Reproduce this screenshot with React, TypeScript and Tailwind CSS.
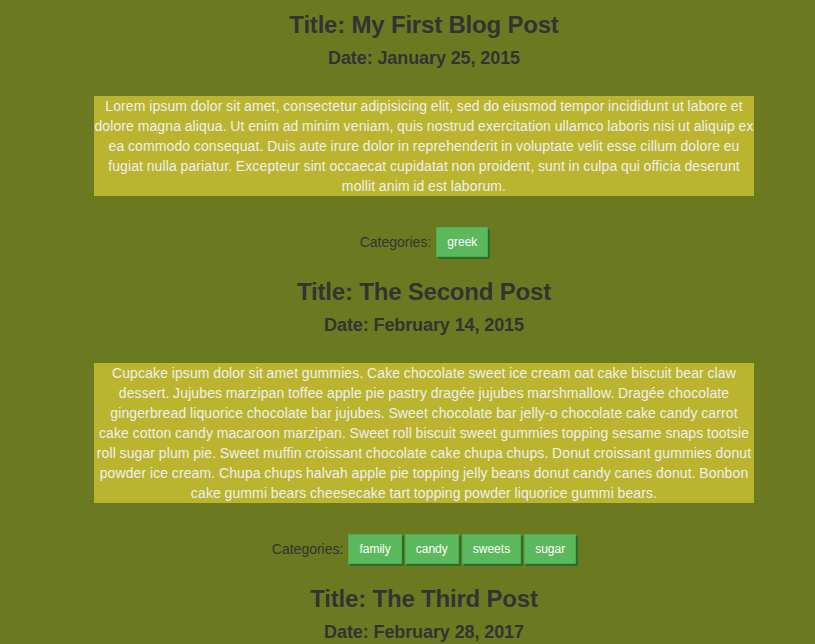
import React from 'react';

interface Post {
  title: string;
  date: string;
  body?: string;
  categories: string[];
}

const posts: Post[] = [
  {
    title: 'My First Blog Post',
    date: 'January 25, 2015',
    body: 'Lorem ipsum dolor sit amet, consectetur adipisicing elit, sed do eiusmod tempor incididunt ut labore et dolore magna aliqua. Ut enim ad minim veniam, quis nostrud exercitation ullamco laboris nisi ut aliquip ex ea commodo consequat. Duis aute irure dolor in reprehenderit in voluptate velit esse cillum dolore eu fugiat nulla pariatur. Excepteur sint occaecat cupidatat non proident, sunt in culpa qui officia deserunt mollit anim id est laborum.',
    categories: ['greek'],
  },
  {
    title: 'The Second Post',
    date: 'February 14, 2015',
    body: 'Cupcake ipsum dolor sit amet gummies. Cake chocolate sweet ice cream oat cake biscuit bear claw dessert. Jujubes marzipan toffee apple pie pastry dragée jujubes marshmallow. Dragée chocolate gingerbread liquorice chocolate bar jujubes. Sweet chocolate bar jelly-o chocolate cake candy carrot cake cotton candy macaroon marzipan. Sweet roll biscuit sweet gummies topping sesame snaps tootsie roll sugar plum pie. Sweet muffin croissant chocolate cake chupa chups. Donut croissant gummies donut powder ice cream. Chupa chups halvah apple pie topping jelly beans donut candy canes donut. Bonbon cake gummi bears cheesecake tart topping powder liquorice gummi bears.',
    categories: ['family', 'candy', 'sweets', 'sugar'],
  },
  {
    title: 'The Third Post',
    date: 'February 28, 2017',
    categories: [],
  },
];

function BlogPost({ post }: { post: Post }) {
  return (
    <div className="pb-[21px]">
      <h3 className="text-[24px] leading-[27px] font-bold tracking-[-0.2px] text-[#333]">Title: {post.title}</h3>
      <h4 className="mt-[10px] text-[18px] leading-[20px] font-bold tracking-[-0.1px] text-[#333]">Date: {post.date}</h4>
      {post.body && (
        <p className="mx-auto mt-[28px] w-[660px] bg-[#bab42f] text-[14px] leading-[20px] tracking-[0.12px] [word-spacing:-0.4px] text-[#f0f0f0]">
          {post.body}
        </p>
      )}
      {post.categories.length > 0 && (
        <div className="mt-[31px] flex items-center justify-center">
          <span className="mr-[5px] text-[14px] leading-[20px] text-[#333]">Categories:</span>
          <div className="flex gap-[3px]">
            {post.categories.map((c) => (
              <button
                key={c}
                className="border border-[#4cae4c] bg-[#5cb85c] px-[10px] py-[5px] text-[12px] leading-[18px] text-white shadow-[2px_2px_0_#2f6b2f]"
              >
                {c}
              </button>
            ))}
          </div>
        </div>
      )}
    </div>
  );
}

export default function App() {
  return (
    <div className="h-[644px] overflow-hidden bg-[#6b7a21] font-['Liberation_Sans',Arial,sans-serif]">
      <div className="w-[848px] pt-[11px] text-center">
        {posts.map((p) => (
          <BlogPost key={p.title} post={p} />
        ))}
      </div>
    </div>
  );
}
